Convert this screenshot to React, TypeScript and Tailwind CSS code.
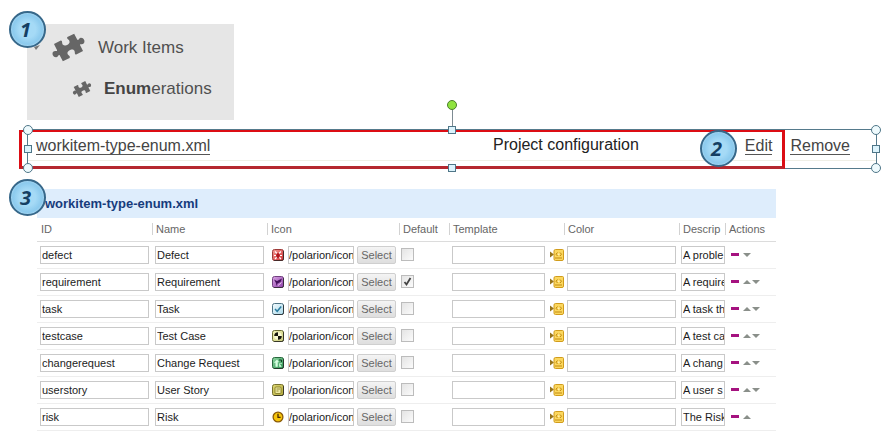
import type { ReactNode } from "react";

type Row = {
  id: string;
  name: string;
  icon: ReactNode;
  description: string;
  isDefault?: boolean;
};

function Tile({ from, to, edge, children }: { from: string; to: string; edge: string; children: ReactNode }) {
  const gradient = `tile-${edge.slice(1)}`;
  return (
    <svg className="block h-3 w-3 shrink-0" viewBox="0 0 12 12" aria-hidden="true">
      <defs>
        <linearGradient id={gradient} x1="0" y1="0" x2="1" y2="1">
          <stop offset="0" stopColor={from} />
          <stop offset="1" stopColor={to} />
        </linearGradient>
      </defs>
      <rect x="0.5" y="0.5" width="11" height="11" rx="2" fill={`url(#${gradient})`} stroke={edge} />
      <path d="M11.5 2V10Q11.5 11.5 10 11.5H2" fill="none" stroke="#222" strokeOpacity="0.7" />
      {children}
    </svg>
  );
}

const rows: Row[] = [
  {
    id: "defect",
    name: "Defect",
    description: "A proble",
    icon: (
      <Tile from="#f39a95" to="#cf2f32" edge="#9c3a38">
        <path d="M3 2.5 5 4.5M9 2.5 7 4.5M2 6.5H4M8 6.5H10M3 10 5 8M9 10 7 8" stroke="#fff" strokeWidth="1.2" />
        <ellipse cx="6" cy="6.5" rx="1.8" ry="2.6" fill="#b3161e" />
      </Tile>
    ),
  },
  {
    id: "requirement",
    name: "Requirement",
    description: "A require",
    isDefault: true,
    icon: (
      <Tile from="#d9a5e4" to="#8d3fa8" edge="#71407f">
        <path d="M2 3.5 5 5 10 2.5 8.5 6 5.5 7.5 4.5 10 4 7Z" fill="#45115c" />
        <path d="M6 9.5 9.5 6.5" stroke="#efcdf6" />
      </Tile>
    ),
  },
  {
    id: "task",
    name: "Task",
    description: "A task th",
    icon: (
      <Tile from="#f4fcff" to="#a9d7e8" edge="#4f7485">
        <path d="M3 6 5.2 8.3 9.2 3.6" fill="none" stroke="#2b7da0" strokeWidth="1.5" />
      </Tile>
    ),
  },
  {
    id: "testcase",
    name: "Test Case",
    description: "A test ca",
    icon: (
      <Tile from="#f4f5b8" to="#c6c879" edge="#6b6c35">
        <circle cx="6" cy="6" r="3.8" fill="#f8f8d0" />
        <path d="M6 6V2.2A3.8 3.8 0 0 0 2.2 6ZM6 6V9.8A3.8 3.8 0 0 0 9.8 6Z" fill="#15150a" />
      </Tile>
    ),
  },
  {
    id: "changerequest",
    name: "Change Request",
    description: "A chang",
    icon: (
      <Tile from="#8ed6a2" to="#2f9253" edge="#28683e">
        <path d="M2.5 5.5 5 2.8 6.5 5H5.4V9.5H3.8V5.5ZM7.5 6.5H10M7.5 6.5V9.5H9.5" fill="#d9ffe2" stroke="#d9ffe2" strokeWidth="0.6" />
        <path d="M7 3H9.5V5" fill="none" stroke="#0d4422" />
      </Tile>
    ),
  },
  {
    id: "userstory",
    name: "User Story",
    description: "A user s",
    icon: (
      <Tile from="#ddd774" to="#b1a83c" edge="#77712e">
        <rect x="3" y="3" width="6" height="6.5" rx="1" fill="#efeaa0" stroke="#7b741f" strokeWidth="0.8" />
        <path d="M4.5 5H8M4.5 7H6.5" stroke="#7b741f" strokeWidth="0.8" />
      </Tile>
    ),
  },
  {
    id: "risk",
    name: "Risk",
    description: "The Risk",
    icon: (
      <svg className="block h-3 w-3 shrink-0" viewBox="0 0 12 12" aria-hidden="true">
        <circle cx="6" cy="6" r="4.9" fill="#f6c50c" stroke="#8a5a08" strokeWidth="1.3" />
        <path d="M6 2.8V6.3H8.6" fill="none" stroke="#4b2b05" strokeWidth="1.3" />
      </svg>
    ),
  },
];

const columns = ["ID", "Name", "Icon", "Default", "Template", "Color", "Descrip", "Actions"];

function Badge({ n }: { n: number }) {
  return (
    <span className="flex h-[37px] w-[37px] items-center justify-center rounded-full border-2 border-[#37688a] bg-radial from-[#a5daf6] from-35% to-[#67b4e2] pr-1 font-['Open_Sans',sans-serif] text-xl leading-none font-bold text-[#143f63] italic shadow-[inset_0_0_2px_#d8f0ff]">
      {n}
    </span>
  );
}

function Puzzle({ className }: { className: string }) {
  return (
    <svg className={className} viewBox="-17 -15 34 30" aria-hidden="true">
      <path
        transform="rotate(-27)"
        fill="#666"
        d="M-11-9.5H-3.6C-1.6-8.4-4.6-6.4-3.4-4.4C-2.4-2.4 2.4-2.4 3.4-4.4C4.6-6.4 1.6-8.4 3.6-9.5H11V-3C11.6-1.2 13.4-4 15.2-3C17.6-1.8 17.6 1.8 15.2 3C13.4 4 11.6 1.2 11 3V9.5H3.6C1.6 8.4 4.6 6.4 3.4 4.4C2.4 2.4-2.4 2.4-3.4 4.4C-4.6 6.4-1.6 8.4-3.6 9.5H-11V3C-11.6 1.2-13.4 4-15.2 3C-17.6 1.8-17.6-1.8-15.2-3C-13.4-4-11.6-1.2-11-3Z"
      />
    </svg>
  );
}

function TextField({ label, value = "", className = "w-full" }: { label: string; value?: string; className?: string }) {
  return (
    <input
      type="text"
      aria-label={label}
      defaultValue={value}
      className={`${className} block h-[18px] min-w-0 border border-[#c9c9c9] bg-white text-[11px] leading-4 text-[#1c1c1c] outline-none`}
    />
  );
}

function PickerIcon() {
  return (
    <svg className="block h-3.5 w-3.5" viewBox="0 0 14 14" aria-hidden="true">
      <path d="M0 3.5 4 6.5 0 9.5Z" fill="#96741c" />
      <path d="M5.5 1.5H12.5Q13.5 1.5 13.5 2.5V11Q13.5 12.5 12 12.5H5.5Q4 12.5 4 11V3Q4 1.5 5.5 1.5Z" fill="#fbd75e" stroke="#d19c1c" />
      <path d="M7.5 4.5 6 6.2 7.5 8M10 4.5 11.5 6.2 10 8M5 10H12" fill="none" stroke="#c08a12" />
      <circle cx="8.8" cy="6.2" r="0.8" fill="#fff6c8" />
    </svg>
  );
}

function Move({ direction }: { direction: "up" | "down" }) {
  return (
    <button type="button" aria-label={`Move ${direction}`} className="block">
      <svg className="block h-2 w-2" viewBox="0 0 8 8" aria-hidden="true">
        <path d={direction === "up" ? "M4 2 8 6H0Z" : "M0 2H8L4 6Z"} fill="#8a8f8a" />
      </svg>
    </button>
  );
}

function Handle({ place, round = false }: { place: string; round?: boolean }) {
  return (
    <span
      className={`absolute ${place} -translate-x-1/2 -translate-y-1/2 border border-[#4f7688] ${
        round ? "h-[10px] w-[10px] rounded-full bg-[#eefafd]" : "h-2 w-2 bg-[#dcf3fc]"
      }`}
    />
  );
}

export default function App() {
  return (
    <main className="bg-white pt-6 pb-4 font-['Liberation_Sans',Arial,sans-serif]">
      <nav className="relative ml-[27px] flex h-24 w-[207px] flex-col bg-[#e6e6e6] pt-2 text-[17px] leading-7 text-[#505050]">
        <svg className="absolute top-5 left-1.5 h-2 w-2" viewBox="0 0 8 8" aria-hidden="true">
          <path d="M1 3 7 1 3 6Z" fill="#777" />
        </svg>
        <span className="absolute -top-[13px] -left-[18px]">
          <Badge n={1} />
        </span>
        <a href="#work-items" className="flex items-center gap-3 pl-6">
          <Puzzle className="h-[31px] w-[35px] shrink-0" />
          <span>Work Items</span>
        </a>
        <a href="#enumerations" className="mt-3 flex items-center gap-3 pl-[45px]">
          <Puzzle className="h-[18px] w-5 shrink-0" />
          <span>
            <b className="text-[#444]">Enum</b>erations
          </span>
        </a>
      </nav>

      <section className="relative mt-[9px] mr-2.5 ml-[27px] flex h-10 items-center border border-[#557a8c] pr-[26px] pb-2 pl-2 text-base text-[#444]">
        <a href="#file" className="leading-[17px] shadow-[0_1px_0_#555]">
          workitem-type-enum.xml
        </a>
        <span className="ml-auto text-[#222]">Project configuration</span>
        <a href="#edit" className="ml-[106px] leading-[17px] shadow-[0_1px_0_#555]">
          Edit
        </a>
        <a href="#remove" className="ml-[18px] leading-[17px] shadow-[0_1px_0_#555]">
          Remove
        </a>

        <span className="pointer-events-none absolute inset-x-0 bottom-[7px] h-px bg-[#efefe6]" />
        <span className="pointer-events-none absolute top-0 right-[91px] -bottom-px -left-[9px] border-t-2 border-r-3 border-b-3 border-l-3 border-t-[#dc0d14] border-r-[#dc0d14] border-b-[#b5282f] border-l-[#dc0d14]" />
        <span className="pointer-events-none absolute -top-5 left-1/2 h-5 w-px bg-[#7d8b92]" />
        <span className="absolute -top-[30px] left-1/2 h-[10px] w-[10px] -translate-x-1/2 rounded-full border border-[#4b7d2c] bg-[#8fe33e]" />
        <span className="pointer-events-none absolute inset-y-0 -left-px w-px bg-[#557a8c]" />
        <Handle round place="top-0 left-0" />
        <Handle round place="top-0 left-full" />
        <Handle round place="top-full left-0" />
        <Handle round place="top-full left-full" />
        <Handle place="top-0 left-1/2" />
        <Handle place="top-full left-1/2" />
        <Handle place="top-1/2 left-0" />
        <Handle place="top-1/2 left-full" />
        <span className="absolute top-0 right-[139px]">
          <Badge n={2} />
        </span>
      </section>

      <section className="relative mt-5 mr-[111px] ml-[37px]">
        <span className="absolute -top-2.5 -left-7">
          <Badge n={3} />
        </span>
        <h2 className="bg-[#deedfc] pl-2 text-[13px] leading-[29px] font-bold text-[#173c7c]">workitem-type-enum.xml</h2>
        <table className="w-full table-fixed border-collapse text-left text-[11px] text-[#666]">
          <colgroup>
            <col />
            <col />
            <col className="w-[132px]" />
            <col className="w-[50px]" />
            <col />
            <col />
            <col className="w-[46px]" />
            <col className="w-[51px]" />
          </colgroup>
          <thead>
            <tr className="h-[23px] border-b border-[#dcdcdc]">
              {columns.map((column, i) => (
                <th key={column} scope="col" className="p-0 font-normal">
                  <span className={`block overflow-hidden border-l pl-[3px] leading-3 ${i === 0 ? "border-transparent" : "border-[#d2d2d2]"}`}>
                    {column}
                  </span>
                </th>
              ))}
            </tr>
          </thead>
          <tbody>
            {rows.map((row, i) => (
              <tr key={row.id} className="h-[27px] border-b border-[#eeeeee]">
                <td className="py-0 pr-[3px] pl-[3px]">
                  <TextField label="ID" value={row.id} className="w-full px-px" />
                </td>
                <td className="py-0 pr-[3px] pl-[3px]">
                  <TextField label="Name" value={row.name} className="w-full px-px" />
                </td>
                <td className="py-0 pr-[3px] pl-[5px]">
                  <div className="flex items-center">
                    {row.icon}
                    <TextField label="Icon path" value="/polarion/icon" className="ml-1 w-[66px]" />
                    <button
                      type="button"
                      className="ml-[3px] h-[18px] w-[39px] rounded-xs border border-[#cfcfcf] bg-linear-to-b from-[#f4f4f4] to-[#dedede] text-[11px] leading-4 text-[#666]"
                    >
                      Select
                    </button>
                  </div>
                </td>
                <td className="py-0 pl-0.5">
                  <span className="relative block h-[13px] w-[13px]">
                    <input
                      type="checkbox"
                      aria-label={`${row.name} is default`}
                      defaultChecked={row.isDefault}
                      className="block h-[13px] w-[13px] appearance-none border border-[#bcbcbc] bg-linear-to-br from-[#e4e4e4] to-[#fbfbfb]"
                    />
                    {row.isDefault && (
                      <svg className="pointer-events-none absolute inset-0 h-[13px] w-[13px]" viewBox="0 0 13 13" aria-hidden="true">
                        <path d="M3.5 7 5.5 9.5 9.5 3" fill="none" stroke="#444" strokeWidth="1.8" />
                      </svg>
                    )}
                  </span>
                </td>
                <td className="py-0 pr-0 pl-[3px]">
                  <div className="flex items-center">
                    <TextField label="Template" className="flex-1" />
                    <button type="button" aria-label="Pick template" className="ml-[5px] block">
                      <PickerIcon />
                    </button>
                  </div>
                </td>
                <td className="py-0 pr-[3px] pl-[3px]">
                  <TextField label="Color" />
                </td>
                <td className="py-0 pr-0 pl-[2px]">
                  <TextField label="Description" value={row.description} className="w-full pl-px" />
                </td>
                <td className="py-0 pl-1.5">
                  <div className="flex items-center gap-x-px">
                    <button type="button" aria-label="Delete row" className="mr-[3px] block h-[3px] w-2 bg-[#a5127f]" />
                    {i > 0 && <Move direction="up" />}
                    {i < rows.length - 1 && <Move direction="down" />}
                  </div>
                </td>
              </tr>
            ))}
          </tbody>
        </table>
      </section>
    </main>
  );
}
